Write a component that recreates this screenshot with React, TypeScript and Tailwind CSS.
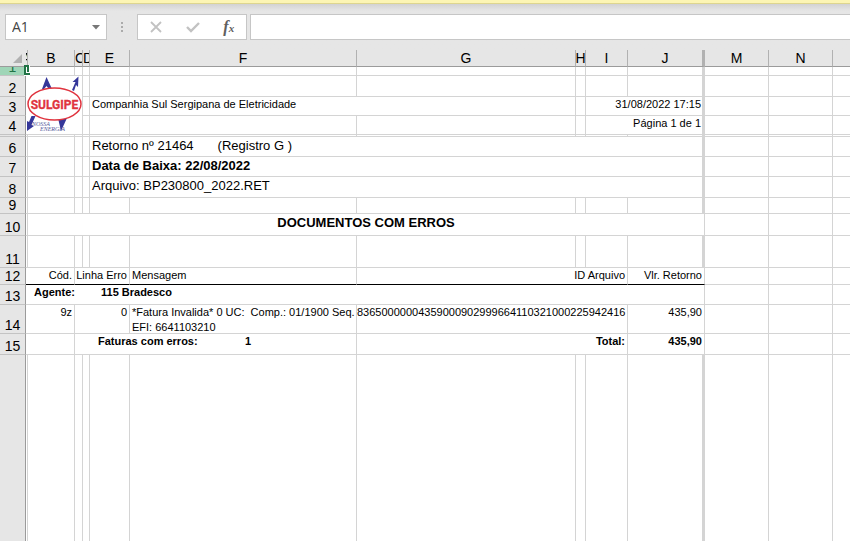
import type { ReactNode } from "react";

const line = "border-[#d4d4d4]";

type CellProps = { span?: number; rows?: number; className?: string; children?: ReactNode };

function Cell({ span = 1, rows = 1, className = "border-r border-b", children }: CellProps) {
  return (
    <td colSpan={span} rowSpan={rows} className={`p-0 align-top ${line} ${className}`}>
      {children}
    </td>
  );
}

function Blank({ count }: { count: number }) {
  return (
    <>
      {Array.from({ length: count }, (_, i) => (
        <Cell key={i} />
      ))}
    </>
  );
}

/* Columns M, N and the one cut off by the window edge */
function Outside() {
  return (
    <>
      <Blank count={2} />
      <Cell className="border-b" />
    </>
  );
}

const thick = "border-r-3 border-b";

function RowHead({ n, className = "bg-[#e6e6e6]" }: { n?: string; className?: string }) {
  return (
    <th
      scope="row"
      className={`border-r border-b border-r-[#9b9b9b] border-b-[#c3c3c3] p-0 align-bottom text-sm/[15px] font-normal ${className}`}
    >
      {n}
    </th>
  );
}

function EmptyRow({ n, height }: { n: string; height: string }) {
  return (
    <tr className={height}>
      <RowHead n={n} />
      <Blank count={9} />
      <Cell className={thick} />
      <Outside />
    </tr>
  );
}

function WideRow({ n, height, children }: { n: string; height: string; children: ReactNode }) {
  return (
    <tr className={height}>
      <RowHead n={n} />
      <Blank count={4} />
      <Cell span={6} className="border-r-3 border-b pt-px pl-0.5 text-[13px]/4">
        {children}
      </Cell>
      <Outside />
    </tr>
  );
}

function Logo() {
  return (
    <svg viewBox="-1 0 56 58" className="block h-[58px] w-14" role="img" aria-label="Sulgipe Nossa Energia">
      <g fill="#35379a">
        <path d="M15 13 19.500 1 25 13h-3l-2.500-3L17 13z" />
        <path d="m45 14 3.500-8h-3L51.500.500 51 11l-2-2-2 6z" />
        <path d="M4.500 40h4L4.500 49l2.500 1-7 5V45l2 1z" />
        <path d="M31 42h9l-6 13z" />
      </g>
      <ellipse cx="27.500" cy="28" rx="26.500" ry="16" fill="#fff" stroke="#e0343f" strokeWidth="1.500" />
      <text x="27.500" y="33" textAnchor="middle" fill="#e0343f" stroke="#e0343f" strokeWidth="0.300" fontFamily="Roboto, sans-serif" fontSize="12" fontWeight="700">
        SULGIPE
      </text>
      <g fill="#55599b" fontFamily="Liberation Serif" fontStyle="italic" fontSize="6">
        <text x="5" y="50">NOSSA</text>
        <text x="13" y="55">ENERGIA</text>
      </g>
    </svg>
  );
}

const headers = ["A", "B", "C", "D", "E", "F", "G", "H", "I", "J", "M", "N", ""];
const headerEdge: Record<string, string> = { J: "border-r-3", "": "" };

export default function App() {
  return (
    <div className="min-h-screen overflow-hidden bg-white font-['Liberation_Sans',Arial,sans-serif] text-black">
      <div className="h-1 border-b border-[#ddd58f] bg-[#fcf5b4]" />
      <div className="flex h-[46px] items-start bg-[#e6e6e6] bg-linear-to-b from-[#d2d2d2] to-[#e6e6e6] to-15% pt-2.5 pl-[5px]">
        <div className="flex h-[26px] w-[102px] items-center border border-[#c6c6c6] bg-white">
          <input
            aria-label="Name box"
            defaultValue="A1"
            className="w-full min-w-0 bg-transparent pl-1.5 font-['Open_Sans',sans-serif] text-sm text-[#444] outline-none"
          />
          <button aria-label="Name list" className="px-1.5">
            <svg viewBox="0 0 8 5" className="h-[5px] w-2">
              <path d="M0 0h8L4 4.5z" fill="#777" />
            </svg>
          </button>
        </div>
        <svg viewBox="0 0 30 26" className="h-[26px] w-[30px]" fill="#ababab">
          <path d="M14 8h2v2h-2zM14 12h2v2h-2zM14 16h2v2h-2z" />
        </svg>
        <div className="flex h-[26px] w-[110px] items-center justify-around border border-[#c6c6c6] bg-white">
          <button aria-label="Cancel">
            <svg viewBox="0 0 12 12" className="size-3" fill="none" stroke="#c2c2c2" strokeWidth="1.8">
              <path d="m1 1 10 10M11 1 1 11" />
            </svg>
          </button>
          <button aria-label="Enter">
            <svg viewBox="0 0 14 12" className="h-3 w-3.5" fill="none" stroke="#c2c2c2" strokeWidth="2.4">
              <path d="m1 6 4 4 8-8" />
            </svg>
          </button>
          <button
            aria-label="Insert function"
            className="font-['Liberation_Serif',serif] text-base/5 font-bold text-[#606060] italic"
          >
            f<span className="text-[11px]">x</span>
          </button>
        </div>
        <input
          aria-label="Formula bar"
          className="ml-[3px] h-[26px] min-w-0 flex-1 border border-r-0 border-[#c6c6c6] bg-white px-1 text-sm outline-none"
        />
      </div>

      <table className="w-full table-fixed border-separate border-spacing-0 text-[11px]/[15px]">
        <colgroup>
          <col className="w-[26px]" />
          <col className="w-0.5" />
          <col className="w-[47px]" />
          <col className="w-2" />
          <col className="w-[7px]" />
          <col className="w-10" />
          <col className="w-[227px]" />
          <col className="w-[219px]" />
          <col className="w-2.5" />
          <col className="w-[42px]" />
          <col className="w-[77px]" />
          <col className="w-16" />
          <col className="w-16" />
          <col />
        </colgroup>
        <thead>
          <tr className="h-[17px] bg-[#e6e6e6]">
            <td className="border-b border-[#9b9b9b] p-0">
              <svg viewBox="0 0 9 9" className="mr-1 ml-auto block size-[9px]">
                <path d="M9 0v9H0z" fill="#b1b1b1" />
              </svg>
            </td>
            {headers.map((h) => (
              <th
                key={h}
                scope="col"
                className={`border-b border-b-[#9b9b9b] border-r-[#b1b1b1] p-0 text-sm/4 font-normal ${headerEdge[h] ?? "border-r"}`}
              >
                <div className={`flex h-4 overflow-hidden ${h === "C" || h === "D" ? "justify-start" : "justify-center"}`}>
                  {h}
                </div>
              </th>
            ))}
          </tr>
        </thead>
        <tbody>
          <tr className="h-[9px]">
            <th scope="row" className="border-r border-b border-r-[#9b9b9b] border-b-[#c3c3c3] bg-[#9fd5b7] p-0 font-normal">
              <div className="flex h-2 items-end justify-center overflow-hidden text-sm/4 text-[#217346]">
                <span className="h-4">1</span>
              </div>
            </th>
            <td className={`relative border-r border-b p-0 ${line}`}>
              <svg viewBox="0 0 6 11" className="absolute -top-0.5 -left-0.5 h-[11px] w-1.5">
                <path d="M0 0h6v11H0z" fill="#fff" />
                <path d="M0 0h5v7H3V2H2v6h4v2H0z" fill="#217346" />
              </svg>
            </td>
            <Blank count={8} />
            <Cell className={thick} />
            <Outside />
          </tr>
          <tr className="h-[21px]">
            <RowHead n="2" />
            <Cell span={3} rows={3}>
              <Logo />
            </Cell>
            <Blank count={6} />
            <Cell className={thick} />
            <Outside />
          </tr>
          <tr className="h-[19px]">
            <RowHead n="3" />
            <Cell />
            <Cell span={3} className="border-r border-b pl-0.5">
              Companhia Sul Sergipana de Eletricidade
            </Cell>
            <Cell />
            <Cell span={2} className="border-r-3 border-b pr-px text-right">
              31/08/2022 17:15
            </Cell>
            <Outside />
          </tr>
          <tr className="h-[19px]">
            <RowHead n="4" />
            <Blank count={5} />
            <Cell span={2} className="border-r-3 border-b pr-px text-right">
              Página 1 de 1
            </Cell>
            <Outside />
          </tr>
          <EmptyRow n="" height="h-0.5" />
          <WideRow n="6" height="h-5">
            Retorno nº 21464<span className="ml-6">(Registro G )</span>
          </WideRow>
          <WideRow n="7" height="h-5">
            <b>Data de Baixa: 22/08/2022</b>
          </WideRow>
          <WideRow n="8" height="h-[21px]">
            Arquivo: BP230800_2022.RET
          </WideRow>
          <EmptyRow n="9" height="h-4" />
          <tr className="h-[22px]">
            <RowHead n="10" />
            <Cell />
            <Cell span={9} className="border-r border-b pt-px text-center text-[13px]/4 font-bold">
              DOCUMENTOS COM ERROS
            </Cell>
            <Outside />
          </tr>
          <EmptyRow n="11" height="h-8" />
          <tr className="h-[17px]">
            <RowHead n="12" />
            <Cell span={2} className="border-r border-b border-b-black pr-0.5 text-right">
              Cód.
            </Cell>
            <Cell span={3} className="border-r border-b border-b-black pr-0.5 text-right whitespace-nowrap">
              Linha Erro
            </Cell>
            <Cell className="border-r border-b border-b-black pl-0.5">Mensagem</Cell>
            <Cell span={3} className="border-b border-r border-b-black pr-0.5 text-right">
              ID Arquivo
            </Cell>
            <Cell className="border-r border-b border-b-black pr-0.5 text-right">Vlr. Retorno</Cell>
            <Outside />
          </tr>
          <tr className="h-5 font-bold">
            <RowHead n="13" />
            <Cell span={4} className="border-b pl-2">
              Agente:
            </Cell>
            <Cell span={6} className="border-r border-b pl-[11px]">
              115 Bradesco
            </Cell>
            <Outside />
          </tr>
          <tr className="h-[29px]">
            <RowHead n="14" />
            <Cell span={2} className="border-r border-b pr-0.5 text-right">
              9z
            </Cell>
            <Cell span={3} className="border-r border-b pr-0.5 text-right">
              0
            </Cell>
            <Cell className="border-r border-b pl-0.5">
              <div className="h-7 whitespace-nowrap">
                *Fatura Invalida* 0 UC:&nbsp; Comp.: 01/1900 Seq.
                <br />
                EFI: 6641103210
              </div>
            </Cell>
            <Cell span={3} className="border-r border-b pr-0.5 text-right">
              83650000004359000902999664110321000225942416
            </Cell>
            <Cell className="border-r border-b pr-0.5 text-right">435,90</Cell>
            <Outside />
          </tr>
          <tr className="h-[21px] font-bold">
            <RowHead n="15" />
            <Cell span={2} />
            <Cell span={3} className="border-b pl-[23px] whitespace-nowrap">
              Faturas com erros:
            </Cell>
            <Cell className="border-r border-b pl-[115px]">1</Cell>
            <Cell span={3} className="border-r border-b pr-0.5 text-right">
              Total:
            </Cell>
            <Cell className="border-r border-b pr-0.5 text-right">435,90</Cell>
            <Outside />
          </tr>
          <tr className="h-[calc(100vh-354px)]">
            <RowHead />
            <Blank count={9} />
            <Cell className={thick} />
            <Outside />
          </tr>
        </tbody>
      </table>
    </div>
  );
}
